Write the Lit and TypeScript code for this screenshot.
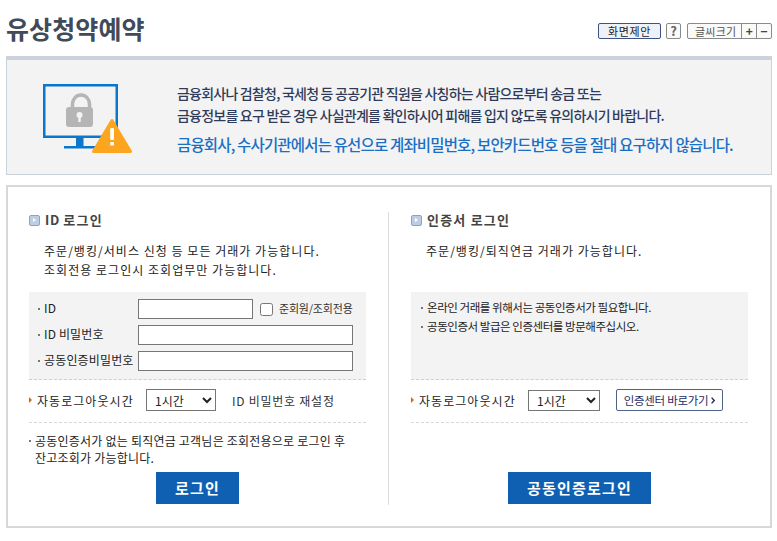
import { LitElement, html, css } from "lit";
import { customElement } from "lit/decorators.js";

@customElement("app-root")
export class AppRoot extends LitElement {
  static styles = css`
    :host {
      display: block;
      width: 777px;
      height: 541px;
      box-sizing: border-box;
      padding: 0 5px 0 6px;
      background: #fff;
      overflow: hidden;
      font-family: "Noto Sans CJK KR", "Noto Sans", sans-serif;
      font-size: 12px;
      color: #222;
    }
    * { box-sizing: border-box; }
    .head {
      height: 56px;
      display: flex;
      align-items: flex-start;
      justify-content: space-between;
    }
    h1 {
      margin: 10px 0 0;
      font-size: 25px;
      line-height: 36px;
      font-weight: 700;
      color: #414a58;
      letter-spacing: 0.1px;
    }
    .tools {
      display: flex;
      gap: 5px;
      margin-top: 23px;
    }
    .tool {
      height: 16px;
      display: flex;
      align-items: center;
      justify-content: center;
      border: 1px solid #8a8a8a;
      border-radius: 2px;
      background: #fafafa;
      font-size: 11px;
      line-height: 14px;
      color: #555;
    }
    .suggest {
      width: 63px;
      border-color: #3d5288;
      background: #eef1f7;
      color: #222;
      letter-spacing: 0.6px;
    }
    .q { width: 15px; font-size: 13px; font-weight: 700; color: #666; }
    .size { width: 85px; margin-left: 1px; justify-content: flex-start; }
    .size span { display: flex; align-items: center; justify-content: center; height: 100%; }
    .size .lbl { width: 54px; letter-spacing: 0.2px; padding-left: 2px; }
    .size .pm { width: 15px; border-left: 1px solid #8a8a8a; font-size: 12px; font-weight: 700; color: #444; }
    .banner {
      height: 119px;
      display: flex;
      border: 1px solid #cbd2dc;
      border-top-width: 4px;
      background: #f3f3f4;
      padding: 24px 0 0 36px;
    }
    .banner svg { flex: none; display: block; }
    .msg { margin: -2px 0 0 44px; }
    .msg p {
      margin: 0;
      font-size: 14px;
      line-height: 22px;
      font-weight: 500;
      color: #2f3b59;
      letter-spacing: -0.78px;
      white-space: nowrap;
    }
    .msg .blue {
      margin-top: 7px;
      font-size: 15.5px;
      color: #1a6fc4;
      letter-spacing: -0.84px;
    }
    .panel {
      margin-top: 10px;
      height: 343px;
      border: 2px solid #d8d8d8;
      padding: 25px 22px 0 21px;
    }
    .cols { display: flex; height: 293px; }
    .col {
      width: 337px;
      display: flex;
      flex-direction: column;
    }
    .divider { width: 1px; margin: 0 22px 0 22px; background: #dcdcdc; flex: none; }
    h2 {
      margin: 0;
      height: 16px;
      display: flex;
      align-items: center;
      gap: 5px;
      font-size: 13px;
      line-height: 16px;
      font-weight: 700;
      color: #444;
      letter-spacing: 1.2px;
    }
    h2 .id { letter-spacing: 0.6px; white-space: pre; }
    .sq {
      flex: none;
      width: 11px;
      height: 11px;
      border: 1px solid #8aa3c8;
      border-radius: 2px;
      background: #bccde4;
      display: flex;
      align-items: center;
      justify-content: center;
    }
    .sq::after {
      content: "";
      border-left: 3px solid #fff;
      border-top: 2.5px solid transparent;
      border-bottom: 2.5px solid transparent;
    }
    .desc {
      margin-top: 13px;
      height: 51px;
      padding-left: 15px;
      line-height: 19px;
      letter-spacing: 1.03px;
      color: #222;
    }
    .box {
      height: 88px;
      background: #f3f3f3;
      border-bottom: 1px dashed #d0d0d0;
    }
    .form {
      padding: 7px 0 0 9px;
      display: grid;
      grid-template-columns: 100px 215px;
      grid-auto-rows: 20px;
      row-gap: 6px;
    }
    .lab {
      display: flex;
      align-items: center;
      gap: 4px;
      white-space: nowrap;
      letter-spacing: 0.15px;
      padding-bottom: 3px;
    }
    .lab .dot { margin-top: 2px; }
    .dot { flex: none; width: 2px; height: 2px; background: #777; }
    input[type="text"] {
      display: block;
      width: 100%;
      height: 20px;
      margin: 0;
      border: 1px solid #767676;
      background: #fff;
      padding: 0 2px;
    }
    .idrow { display: flex; align-items: center; }
    .idrow input[type="text"] { width: 115px; flex: none; }
    .idrow input[type="checkbox"] { width: 13px; height: 13px; margin: 0 6px 0 7px; flex: none; }
    .idrow label { font-size: 11px; letter-spacing: -0.2px; white-space: nowrap; color: #333; padding-bottom: 2px; }
    .info { padding: 6px 0 0 10px; font-size: 11.5px; letter-spacing: -0.45px; line-height: 19px; }
    .info div { display: flex; align-items: center; gap: 4px; }
    .auto {
      height: 43px;
      display: flex;
      align-items: center;
      border-bottom: 1px dashed #d8d8d8;
      padding-bottom: 2px;
      letter-spacing: 1.05px;
    }
    .arrow {
      flex: none;
      margin-right: 5px;
      border-left: 3px solid #d86a10;
      border-top: 3px solid transparent;
      border-bottom: 3px solid transparent;
    }
    .autolab { width: 109px; flex: none; white-space: nowrap; }
    select {
      font: 12px "Noto Sans CJK KR", sans-serif;
      height: 22px;
      width: 70px;
      border: 1px solid #767676;
      border-radius: 0;
      background-color: #fff;
      padding: 0 0 0 4px;
      flex: none;
      color: #222;
    }
    .right select { width: 72px; height: 21px; }
    .reset { margin-left: 16px; letter-spacing: 0.75px; color: #333; }
    .go {
      margin-left: 16px;
      width: 107px;
      height: 22px;
      display: flex;
      align-items: center;
      justify-content: center;
      gap: 3px;
      border: 1px solid #4d6388;
      border-radius: 2px;
      background: #fff;
      font-size: 11.5px;
      letter-spacing: -0.3px;
      color: #1f2d63;
      white-space: nowrap;
    }
    .go svg { flex: none; display: block; }
    .note {
      margin-top: 9px;
      line-height: 17px;
      letter-spacing: 0.22px;
      color: #222;
      display: grid;
      grid-template-columns: 6px 1fr;
      column-gap: 0;
    }
    .note .dot { margin-top: 8px; }
    .btn {
      align-self: center;
      margin-top: auto;
      margin-bottom: 1px;
      height: 32px;
      padding: 0 0 2px;
      display: flex;
      align-items: center;
      justify-content: center;
      background: #0f60b2;
      color: #fff;
      border: 0;
      font: 700 15px "Noto Sans CJK KR", sans-serif;
      letter-spacing: 1.2px;
    }
    .b1 { width: 83px; }
    .b2 { width: 143px; }
  `;

  render() {
    return html`
      <div class="head">
        <h1>유상청약예약</h1>
        <div class="tools">
          <div class="tool suggest">화면제안</div>
          <div class="tool q">?</div>
          <div class="tool size">
            <span class="lbl">글씨크기</span>
            <span class="pm">+</span>
            <span class="pm">−</span>
          </div>
        </div>
      </div>

      <div class="banner">
        <svg width="90" height="70" viewBox="0 0 90 70" aria-hidden="true">
          <rect x="1.25" y="1.25" width="72.5" height="51.5" fill="#f3f3f4" stroke="#0a76cc" stroke-width="2.5" />
          <rect x="33" y="54" width="7.5" height="9" fill="#0a76cc" />
          <rect x="21" y="62" width="32" height="2.5" fill="#0a76cc" />
          <path d="M29.5 25 v-5 a8.5 9 0 0 1 17 0 v5" fill="none" stroke="#b5b5b5" stroke-width="3.5" />
          <rect x="23" y="23" width="27" height="20" rx="3" fill="#b5b5b5" />
          <circle cx="36.5" cy="31" r="3" fill="#f3f3f4" />
          <rect x="35.3" y="32" width="2.4" height="6" fill="#f3f3f4" />
          <path d="M69 36.5 L87.5 67.5 H50.5 Z" fill="#fca61f" stroke="#fca61f" stroke-width="3" stroke-linejoin="round" />
          <rect x="67.2" y="44" width="3.8" height="12" rx="1" fill="#fff" />
          <rect x="67.2" y="58" width="3.8" height="3.6" rx="0.8" fill="#fff" />
        </svg>
        <div class="msg">
          <p>금융회사나 검찰청, 국세청 등 공공기관 직원을 사칭하는 사람으로부터 송금 또는</p>
          <p>금융정보를 요구 받은 경우 사실관계를 확인하시어 피해를 입지 않도록 유의하시기 바랍니다.</p>
          <p class="blue">금융회사, 수사기관에서는 유선으로 계좌비밀번호, 보안카드번호 등을 절대 요구하지 않습니다.</p>
        </div>
      </div>

      <div class="panel">
        <div class="cols">
          <section class="col">
            <h2><span class="sq"></span><span><span class="id">ID </span>로그인</span></h2>
            <div class="desc">
              주문/뱅킹/서비스 신청 등 모든 거래가 가능합니다.<br />
              조회전용 로그인시 조회업무만 가능합니다.
            </div>
            <div class="box form">
              <div class="lab"><span class="dot"></span>ID</div>
              <div class="idrow">
                <input type="text" aria-label="ID" />
                <input type="checkbox" id="q" />
                <label for="q">준회원/조회전용</label>
              </div>
              <div class="lab"><span class="dot"></span>ID 비밀번호</div>
              <input type="text" aria-label="ID 비밀번호" />
              <div class="lab"><span class="dot"></span>공동인증비밀번호</div>
              <input type="text" aria-label="공동인증비밀번호" />
            </div>
            <div class="auto">
              <span class="arrow"></span><span class="autolab">자동로그아웃시간</span>
              <select aria-label="자동로그아웃시간"><option>1시간</option></select>
              <span class="reset">ID 비밀번호 재설정</span>
            </div>
            <div class="note">
              <span class="dot"></span><span>공동인증서가 없는 퇴직연금 고객님은 조회전용으로 로그인 후<br />잔고조회가 가능합니다.</span>
            </div>
            <button class="btn b1">로그인</button>
          </section>
          <div class="divider"></div>
          <section class="col right">
            <h2><span class="sq"></span>인증서 로그인</h2>
            <div class="desc">주문/뱅킹/퇴직연금 거래가 가능합니다.</div>
            <div class="box info">
              <div><span class="dot"></span>온라인 거래를 위해서는 공동인증서가 필요합니다.</div>
              <div><span class="dot"></span>공동인증서 발급은 인증센터를 방문해주십시오.</div>
            </div>
            <div class="auto">
              <span class="arrow"></span><span class="autolab">자동로그아웃시간</span>
              <select aria-label="자동로그아웃시간"><option>1시간</option></select>
              <span class="go">인증센터 바로가기<svg width="4" height="7" viewBox="0 0 4 7" aria-hidden="true"><path d="M0.6 0.6 L3.2 3.5 L0.6 6.4" fill="none" stroke="#1f2d63" stroke-width="1.4" /></svg></span>
            </div>
            <button class="btn b2">공동인증로그인</button>
          </section>
        </div>
      </div>
    `;
  }
}
